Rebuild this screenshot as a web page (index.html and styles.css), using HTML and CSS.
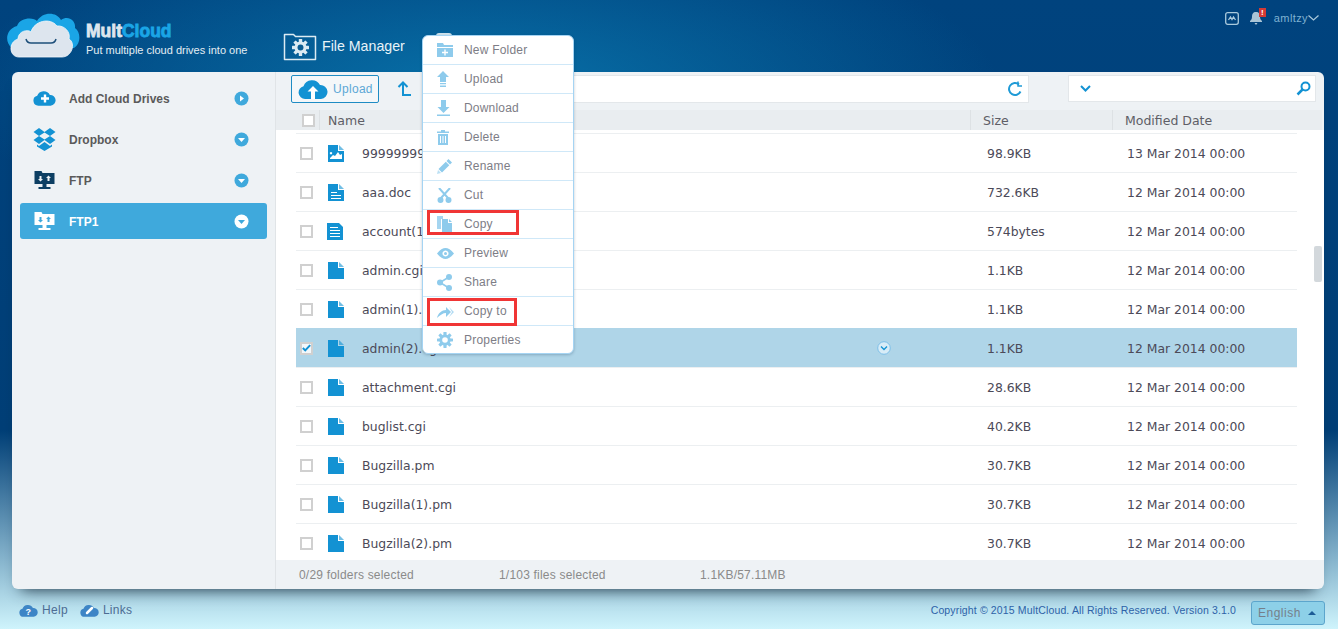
FILE: index.html
```html
<!DOCTYPE html>
<html lang="en">
<head>
    <meta charset="UTF-8">
    <meta name="viewport" content="width=device-width, initial-scale=1.0">
    <title>MultCloud | File Manager</title>
    <link rel="stylesheet" href="styles.css">
</head>
<body>

    <svg class="sprites" width="0" height="0">
        <symbol id="i-file" viewBox="0 0 16 17"><path d="M0 0h10v6h6v11H0z"/><path d="M11 0l5 5h-5z" opacity=".6"/></symbol>
        <symbol id="i-doc" viewBox="0 0 16 17"><path fill-rule="evenodd" d="M0 0h10v6h6v11H0zM3 8v1h6V8zM3 11v1h10v-1zM3 14v1h10v-1z"/><path d="M11 0l5 5h-5z" opacity=".6"/></symbol>
        <symbol id="i-text" viewBox="0 0 16 17"><path fill-rule="evenodd" d="M0 0h12l4 4v13H0zM3 4v1h8V4zM3 7v1h10V7zM3 10v1h10v-1zM3 13v1h10v-1z"/></symbol>
        <symbol id="i-image" viewBox="0 0 16 17"><path fill-rule="evenodd" d="M0 0h10v6h6v11H0zM2 13l3-3 2 1 3-4 2 3 2-1v5H2zM3 7a1.2 1.2 0 1 0 .01 0z"/><path d="M11 0l5 5h-5z" opacity=".6"/></symbol>
        <symbol id="i-ftp" viewBox="0 0 20 20"><path d="M0 1h7l1 2h12v11H0z"/><path d="M8 14h4v3h4v2H4v-2h4z"/><path d="M5 6h2v3h1.500L6 11.500 3.500 9H5zM13 11h2V8h1.500L14 5.500 11.500 8H13z" fill="var(--glyph)"/></symbol>
        <symbol id="i-gear" viewBox="0 0 20 20">
            <rect x="8" y="0" width="4" height="20" rx=".6"/>
            <rect x="8" y="0" width="4" height="20" rx=".6" transform="rotate(45 10 10)"/>
            <rect x="8" y="0" width="4" height="20" rx=".6" transform="rotate(90 10 10)"/>
            <rect x="8" y="0" width="4" height="20" rx=".6" transform="rotate(135 10 10)"/>
            <circle cx="10" cy="10" r="7"/>
            <circle cx="10" cy="10" r="3.500" fill="var(--glyph)"/>
        </symbol>
        <symbol id="i-cloud" viewBox="0 0 30 20"><path d="M7 20a6.500 6.500 0 0 1-1.500-12.800A9 9 0 0 1 22 6a7 7 0 0 1 1 14z"/></symbol>
    </svg>

    <div class="header">
        <div class="logo">
            <svg class="logo-cloud" width="74" height="46" viewBox="0 0 74 46">
                <path d="M6 36C-2 30 0 17 11 14 14 5 28 5 31 9 36 0 50-1 55 8 62 3 70 8 69 16 75 20 75 32 68 36z" fill="#1aa5e6"/>
                <path d="M13 45C3 45 2 30 12 27 12 19 22 17 25 20 28 9 44 5 51 14 58 13 65 20 63 27 70 31 66 45 56 45z" fill="#dde5ee" stroke="#f4f8fb" stroke-width=".8"/>
                <path d="M20 27q1 4 5 4h20q4 0 5-4" fill="none" stroke="#1d4f7a" stroke-width="1.500"/>
            </svg>
            <div class="logo-text">
                <div class="logo-name">Mult<span>Cloud</span></div>
                <div class="logo-slogan">Put multiple cloud drives into one</div>
            </div>
        </div>
        <div class="main-nav">
            <a class="main-nav-item" href="#">
                <svg width="35" height="28" viewBox="0 0 35 28" fill="none" stroke="#dcebf3" stroke-width="1.500"><path d="M1.500 26.500v-25h9l2 2h20v23z" stroke-linejoin="round"/><use href="#i-gear" x="9" y="6" width="17" height="17" fill="#dcebf3" stroke="none" style="--glyph:#0a5c92"/></svg>
                File Manager
            </a>
            <span class="nav-hidden"></span>
        </div>
        <div class="user-bar">
            <svg width="14" height="13" viewBox="0 0 14 13" fill="none" stroke="#a9c9dc" stroke-width="1.300"><rect x=".7" y=".7" width="12.600" height="11.600" rx="2"/><path d="M3.500 8l2-3 1.500 2.500L8.500 5l2 3"/></svg>
            <span class="bell">
                <svg width="12" height="14" viewBox="0 0 12 14" fill="#a9c4d6"><path d="M6 1C3 1 2 3 2 6c0 2-1 3-2 4v1h12v-1c-1-1-2-2-2-4 0-3-1-5-4-5zM4.500 12h3L6 14z"/></svg>
                <span class="bell-count">!</span>
            </span>
            <span class="user-name">amltzy</span>
            <svg width="11" height="6" viewBox="0 0 11 6" fill="none" stroke="#a9c9dc" stroke-width="1.200"><path d="M.5.500l5 4.500 5-4.500"/></svg>
        </div>
    </div>

    <div class="panel">
        <div class="sidebar">
            <div class="drive">
                <svg class="drive-icon" width="23" height="16" fill="#1392d3"><use href="#i-cloud"/><path d="M10.800 4.500h2.400v2.800H16v2.400h-2.800v2.800h-2.400V9.700H8V7.300h2.800z" fill="#fff"/></svg>
                <span>Add Cloud Drives</span>
                <svg class="drive-arrow" width="15" height="15" viewBox="0 0 15 15"><circle cx="7.500" cy="7.500" r="7" fill="#3fa9dc"/><path d="M6 4.500l4 3-4 3z" fill="#fff"/></svg>
            </div>
            <div class="drive">
                <svg class="drive-icon" width="23" height="23" viewBox="0 0 23 23" fill="#1392d3"><path fill-rule="evenodd" d="M6 0l5.500 4L17 0l5.500 4L17 8l5.500 4-5.500 4-5.500-4L6 16 .5 12 6 8 .5 4zM6 8l5.500 3.500L17 8l-5.500-3.500z"/><path d="M4 16.500L6 18l5.500-4 5.500 4 2-1.500v2L11.500 23 4 18.500z"/></svg>
                <span>Dropbox</span>
                <svg class="drive-arrow" width="15" height="15" viewBox="0 0 15 15"><circle cx="7.500" cy="7.500" r="7" fill="#3fa9dc"/><path d="M4 6h7l-3.500 4z" fill="#fff"/></svg>
            </div>
            <div class="drive">
                <svg class="drive-icon" width="20" height="20" fill="#0d3f63" style="--glyph:#eef2f5"><use href="#i-ftp"/></svg>
                <span>FTP</span>
                <svg class="drive-arrow" width="15" height="15" viewBox="0 0 15 15"><circle cx="7.500" cy="7.500" r="7" fill="#3fa9dc"/><path d="M4 6h7l-3.500 4z" fill="#fff"/></svg>
            </div>
            <div class="drive active">
                <svg class="drive-icon" width="20" height="20" fill="#fff" style="--glyph:#3fa9dc"><use href="#i-ftp"/></svg>
                <span>FTP1</span>
                <svg class="drive-arrow" width="15" height="15" viewBox="0 0 15 15"><circle cx="7.500" cy="7.500" r="7" fill="#fff"/><path d="M4 6h7l-3.500 4z" fill="#3fa9dc"/></svg>
            </div>
        </div>

        <div class="main">
            <div class="toolbar">
                <button class="upload-btn">
                    <svg width="30" height="20" fill="#1392d3"><use href="#i-cloud"/><path d="M15 7l5.500 5.500H17V20h-4v-7.500H9.500z" fill="#fff"/></svg>
                    Upload
                </button>
                <svg class="up-icon" width="14" height="16" viewBox="0 0 14 16" fill="none" stroke="#1392d3" stroke-width="2"><path d="M6 15V2M1.500 6L6 1.500 10.500 6M6 14h8"/></svg>
                <div class="path-box">
                    <svg width="16" height="16" viewBox="0 0 16 16" fill="none" stroke="#1f9ad6" stroke-width="2"><path d="M13.500 10.500A6 6 0 1 1 12 3.500"/><path d="M12 .5v4.500H16" stroke-width="1.500" transform="translate(-1 0)"/></svg>
                </div>
                <div class="search-box">
                    <svg width="11" height="7" viewBox="0 0 11 7" fill="none" stroke="#1392d3" stroke-width="2"><path d="M1 1l4.500 4.500L10 1"/></svg>
                    <svg width="15" height="15" viewBox="0 0 15 15" fill="none" stroke="#1392d3" stroke-width="2"><circle cx="9.500" cy="5.500" r="4"/><path d="M6.500 8.500L1.500 13.500" stroke-width="2.500"/></svg>
                </div>
            </div>

            <div class="list-head">
                <div class="col-check"><span class="checkbox"></span></div>
                <div class="col-name">Name</div>
                <div class="col-size">Size</div>
                <div class="col-date">Modified Date</div>
            </div>

            <div class="list-wrap">
                <div class="file-list">
                    <div class="file-row"><span class="checkbox"></span><svg class="file-icon" width="16" height="17"><use href="#i-image"/></svg><span class="file-name">99999999.jpg</span><span class="file-size">98.9KB</span><span class="file-date">13 Mar 2014 00:00</span></div>
                    <div class="file-row"><span class="checkbox"></span><svg class="file-icon" width="16" height="17"><use href="#i-doc"/></svg><span class="file-name">aaa.doc</span><span class="file-size">732.6KB</span><span class="file-date">12 Mar 2014 00:00</span></div>
                    <div class="file-row"><span class="checkbox"></span><svg class="file-icon text-icon" width="16" height="17"><use href="#i-text"/></svg><span class="file-name">account(1).txt</span><span class="file-size">574bytes</span><span class="file-date">12 Mar 2014 00:00</span></div>
                    <div class="file-row"><span class="checkbox"></span><svg class="file-icon" width="16" height="17"><use href="#i-file"/></svg><span class="file-name">admin.cgi</span><span class="file-size">1.1KB</span><span class="file-date">12 Mar 2014 00:00</span></div>
                    <div class="file-row"><span class="checkbox"></span><svg class="file-icon" width="16" height="17"><use href="#i-file"/></svg><span class="file-name">admin(1).cgi</span><span class="file-size">1.1KB</span><span class="file-date">12 Mar 2014 00:00</span></div>
                    <div class="file-row selected">
                        <span class="checkbox checked"><svg width="10" height="8" viewBox="0 0 11 9" fill="none" stroke="#1392d3" stroke-width="2.400"><path d="M1 4.500L4 7.500 10 1"/></svg></span>
                        <svg class="file-icon" width="16" height="17"><use href="#i-file"/></svg>
                        <span class="file-name">admin(2).cgi<svg class="row-menu" width="14" height="14" viewBox="0 0 14 14" fill="#d8ecf7" stroke="#7dbfe8"><circle cx="7" cy="7" r="6.300"/><path d="M4 5.500l3 3 3-3" fill="none" stroke="#1392d3" stroke-width="1.300"/></svg></span>
                        <span class="file-size">1.1KB</span><span class="file-date">12 Mar 2014 00:00</span>
                    </div>
                    <div class="file-row"><span class="checkbox"></span><svg class="file-icon" width="16" height="17"><use href="#i-file"/></svg><span class="file-name">attachment.cgi</span><span class="file-size">28.6KB</span><span class="file-date">12 Mar 2014 00:00</span></div>
                    <div class="file-row"><span class="checkbox"></span><svg class="file-icon" width="16" height="17"><use href="#i-file"/></svg><span class="file-name">buglist.cgi</span><span class="file-size">40.2KB</span><span class="file-date">12 Mar 2014 00:00</span></div>
                    <div class="file-row"><span class="checkbox"></span><svg class="file-icon" width="16" height="17"><use href="#i-file"/></svg><span class="file-name">Bugzilla.pm</span><span class="file-size">30.7KB</span><span class="file-date">12 Mar 2014 00:00</span></div>
                    <div class="file-row"><span class="checkbox"></span><svg class="file-icon" width="16" height="17"><use href="#i-file"/></svg><span class="file-name">Bugzilla(1).pm</span><span class="file-size">30.7KB</span><span class="file-date">12 Mar 2014 00:00</span></div>
                    <div class="file-row"><span class="checkbox"></span><svg class="file-icon" width="16" height="17"><use href="#i-file"/></svg><span class="file-name">Bugzilla(2).pm</span><span class="file-size">30.7KB</span><span class="file-date">12 Mar 2014 00:00</span></div>
                </div>
                <div class="scroll-thumb"></div>
            </div>

            <div class="status-bar">
                <span class="status-folders">0/29 folders selected</span>
                <span class="status-files">1/103 files selected</span>
                <span>1.1KB/57.11MB</span>
            </div>
        </div>
    </div>

    <div class="footer">
        <a class="foot-link" href="#">
            <svg width="19" height="13" fill="#3d85c6"><use href="#i-cloud" width="19" height="13"/><text x="9.500" y="11" class="foot-glyph">?</text></svg>
            Help
        </a>
        <a class="foot-link" href="#">
            <svg width="19" height="13" fill="#3d85c6"><use href="#i-cloud" width="19" height="13"/><path d="M7 9l5-5" stroke="#fff" stroke-width="2.500" stroke-linecap="round"/></svg>
            Links
        </a>
        <span class="copyright">Copyright © 2015 MultCloud. All Rights Reserved. Version 3.1.0</span>
        <div class="lang-select">English <i class="lang-caret"></i></div>
    </div>

    <div class="context-menu">
        <div class="menu-item"><svg width="16" height="14" viewBox="0 0 16 14"><path d="M0 0h6l1 2h9v2H0zM0 5h16v9H0z"/><path d="M7.300 6.500h1.400v2.300H11v1.400H8.700v2.300H7.300v-2.300H5V8.800h2.300z" fill="#fff"/></svg>New Folder</div>
        <div class="menu-item"><svg width="12" height="16" viewBox="0 0 12 16"><path d="M6 0l6 6H9v5H3V6H0zM3 12h6v1.200H3zM3 14.500h6V16H3z"/></svg>Upload</div>
        <div class="menu-item"><svg width="13" height="16" viewBox="0 0 13 16"><path d="M4 0h5v7h3.500l-6 6-6-6H4zM0 14.500h13V16H0z"/></svg>Download</div>
        <div class="menu-item"><svg width="12" height="15" viewBox="0 0 12 15"><path fill-rule="evenodd" d="M4 0h4v1.500h4V3H0V1.500h4zM1 4h10v11H1zM3 6v7h1V6zM5.500 6v7h1V6zM8 6v7h1V6z"/></svg>Delete</div>
        <div class="menu-item"><svg width="15" height="15" viewBox="0 0 15 15"><path d="M11.500 0L15 3.500 13 5.500 9.500 2zM8.800 2.700l3.500 3.500-7.300 7.300-3.500-3.500z"/><path d="M1 11l3 3-4 1z" opacity=".6"/></svg>Rename</div>
        <div class="menu-item"><svg width="15" height="15" viewBox="0 0 15 15" fill="none" stroke="#8ecbec" stroke-width="2"><path d="M2 0l9 10M13 0L4 10"/><circle cx="3.500" cy="12" r="2"/><circle cx="11.500" cy="12" r="2"/></svg>Cut</div>
        <div class="menu-item marked mark-copy"><svg width="15" height="16" viewBox="0 0 15 16"><path d="M0 0h6v3H4v10H0z" opacity=".8"/><path d="M5 3h6v4h4v9H5zM12 3l3 3h-3z"/></svg>Copy</div>
        <div class="menu-item"><svg width="17" height="11" viewBox="0 0 17 11"><path fill-rule="evenodd" d="M0 5.500C3 1.500 6 0 8.500 0S14 1.500 17 5.500C14 9.500 11 11 8.500 11S3 9.500 0 5.500zM8.500 2.500a3 3 0 1 0 .01 0z"/><circle cx="8.500" cy="5.500" r="1.500"/></svg>Preview</div>
        <div class="menu-item"><svg width="15" height="17" viewBox="0 0 15 17"><circle cx="3" cy="8.500" r="3"/><circle cx="12" cy="3" r="3"/><circle cx="12" cy="14" r="3"/><path d="M3 8.500L12 3M3 8.500L12 14" stroke="#8ecbec" stroke-width="1.500"/></svg>Share</div>
        <div class="menu-item marked mark-copy-to"><svg class="copy-to-icon" width="18" height="11" viewBox="0 0 18 11"><path d="M0 11C1 6 5 3 9 3V0l5 5-5 5V6C6 6 3 8 0 11z"/><path d="M12 0l5 5-5 5 3-5z" opacity=".7"/></svg>Copy to</div>
        <div class="menu-item"><svg width="16" height="16" style="--glyph:#fff"><use href="#i-gear" width="16" height="16"/></svg>Properties</div>
    </div>

</body>
</html>
```

FILE: styles.css
```css
/* General */
body {
    margin: 0;
    height: 629px;
    overflow: hidden;
    font-family: 'Liberation Sans', Arial, sans-serif;
    background:
        radial-gradient(ellipse 520px 170px at 480px 90px, rgba(10, 125, 180, 0.8), rgba(10, 125, 180, 0) 100%),
        linear-gradient(to bottom, #00437e 0, #003f77 430px, #cff4fc 629px);
}
a {
    text-decoration: none;
    color: inherit;
}
.sprites {
    position: absolute;
}

/* Header */
.header {
    height: 72px;
    display: flex;
    box-sizing: border-box;
    padding: 0 19px 0 6px;
}
.logo {
    display: flex;
    width: 277px;
    padding-top: 12px;
}
.logo-cloud {
    flex: none;
}
.logo-text {
    margin-left: 6px;
    padding-top: 9px;
}
.logo-name {
    font-size: 17.500px;
    line-height: 20px;
    font-weight: bold;
    color: #dde6ee;
    -webkit-text-stroke: 0.8px currentColor;
}
.logo-name span {
    color: #1aa5e6;
}
.logo-slogan {
    font-size: 11px;
    line-height: 16px;
    margin-top: 1px;
    color: #e3eef4;
    white-space: nowrap;
}
.main-nav {
    display: flex;
    flex: 1;
    padding-top: 33px;
    gap: 31px;
}
.main-nav-item {
    display: flex;
    align-items: flex-start;
    gap: 4px;
    color: #e8f3f8;
    font-size: 14.200px;
    line-height: 26px;
}
.nav-hidden {
    width: 16px;
    height: 6px;
    background: #cfe3ee;
    border-radius: 3px 3px 0 0;
}
.user-bar {
    display: flex;
    align-items: center;
    align-self: flex-start;
    margin-top: 11px;
    height: 14px;
    color: #7fb2d2;
    font-size: 11px;
}
.bell {
    position: relative;
    margin-left: 11px;
    height: 14px;
}
.bell-count {
    position: absolute;
    top: -3px;
    left: 9px;
    width: 7px;
    height: 9px;
    background: #d33a35;
    color: #fff;
    font-size: 8px;
    font-weight: bold;
    line-height: 9px;
    text-align: center;
}
.user-name {
    margin-left: 12px;
    letter-spacing: 0.4px;
}

/* Panel */
.panel {
    display: flex;
    height: 517px;
    margin: 0 14px 0 12px;
    border-radius: 6px;
    overflow: hidden;
    background: #eef2f5;
    box-shadow: 0 10px 14px -9px rgba(15, 35, 50, 0.85);
}
.sidebar {
    width: 264px;
    box-sizing: border-box;
    padding: 8px 8px 0;
    border-right: 1px solid #e0e4e7;
    display: flex;
    flex-direction: column;
    gap: 5px;
    flex: none;
}
.drive {
    display: flex;
    align-items: center;
    height: 36px;
    width: 247px;
    padding: 0 18px 0 13px;
    box-sizing: border-box;
    font-size: 12px;
    font-weight: bold;
    color: #5a5a5a;
    border-radius: 3px;
}
.drive-icon {
    width: 23px;
    flex: none;
    margin-right: 13px;
}
.drive span {
    flex: 1;
    padding-top: 1px;
}
.drive-arrow {
    flex: none;
}
.drive.active {
    background: #3fa9dc;
    color: #fff;
}

/* Main */
.main {
    flex: 1;
    display: flex;
    flex-direction: column;
    min-width: 0;
}
.toolbar {
    height: 38px;
    flex: none;
    display: flex;
    align-items: flex-start;
    padding-top: 3px;
    box-sizing: border-box;
    padding-left: 15px;
}
.upload-btn {
    width: 88px;
    height: 28px;
    padding: 0 0 0 6px;
    display: flex;
    align-items: center;
    gap: 5px;
    background: #f4f7f9;
    border: 1px solid #1f8cc4;
    border-radius: 2px;
    color: #5da8d6;
    font: 12px 'Liberation Sans', Arial, sans-serif;
    letter-spacing: 0.3px;
    box-sizing: border-box;
}
.up-icon {
    margin: 6px 0 0 18px;
}
.path-box {
    display: flex;
    align-items: center;
    justify-content: flex-end;
    margin-left: 24px;
    width: 594px;
    height: 28px;
    box-sizing: border-box;
    padding-right: 5px;
    background: #fff;
    border: 1px solid #e3e7ea;
}
.search-box {
    display: flex;
    align-items: center;
    justify-content: space-between;
    margin-left: 39px;
    width: 248px;
    height: 27px;
    box-sizing: border-box;
    padding: 0 4px 0 11px;
    background: #fff;
    border: 1px solid #e3e7ea;
}
.list-head {
    height: 20px;
    flex: none;
    display: flex;
    align-items: center;
    margin-right: 2px;
    background: #e9edf0;
    color: #5e5e66;
    font-family: 'DejaVu Sans', Verdana, sans-serif;
    font-size: 12.500px;
}
.list-head .checkbox {
    background: #fff;
}
.col-check {
    width: 44px;
    height: 20px;
    padding-left: 26px;
    box-sizing: border-box;
    display: flex;
    align-items: center;
    border-right: 1px solid #dde1e4;
}
.col-name {
    width: 650px;
    padding-left: 8px;
    box-sizing: border-box;
}
.col-size {
    width: 142px;
    height: 20px;
    line-height: 22px;
    padding-left: 12px;
    box-sizing: border-box;
    border-left: 1px solid #dde1e4;
}
.col-date {
    height: 20px;
    flex: 1;
    line-height: 22px;
    padding-left: 12px;
    border-left: 1px solid #dde1e4;
}
.checkbox {
    display: flex;
    align-items: center;
    justify-content: center;
    width: 13px;
    height: 13px;
    flex: none;
    box-sizing: border-box;
    border: 2px solid #d0d0d0;
}

/* File list */
.list-wrap {
    position: relative;
    flex: 1;
    background: #fff;
    overflow: hidden;
    padding-left: 20px;
}
.file-list {
    width: 1001px;
    padding-top: 3px;
}
.file-row {
    display: flex;
    align-items: center;
    height: 38px;
    border-top: 1px solid #eceff1;
    color: #4c4a58;
    font-family: 'DejaVu Sans', Verdana, sans-serif;
    font-size: 12.400px;
    padding-left: 4px;
}
.file-row.selected {
    background: #afd5e8;
    border-top-color: #afd5e8;
}
.file-icon {
    flex: none;
    margin-left: 15px;
    margin-right: 18px;
    fill: #1392d3;
    --glyph: #fff;
}
.file-icon.text-icon {
    margin-left: 14px;
    margin-right: 19px;
}
.file-name {
    flex: none;
    width: 625px;
    display: flex;
    align-items: center;
    justify-content: space-between;
    box-sizing: border-box;
    padding-right: 96px;
}
.file-size {
    flex: none;
    width: 140px;
}
.file-row .checkbox.checked {
    background: #f3f8fb;
}
.scroll-thumb {
    position: absolute;
    top: 116px;
    right: 2px;
    width: 8px;
    height: 36px;
    border-radius: 2px;
    background: #d3d8dc;
}
.status-bar {
    height: 29px;
    flex: none;
    display: flex;
    align-items: center;
    padding-left: 23px;
    color: #8a8a8a;
    font-size: 12px;
    letter-spacing: 0.2px;
}
.status-folders {
    width: 200px;
}
.status-files {
    width: 201px;
}

/* Footer */
.footer {
    height: 40px;
    display: flex;
    align-items: flex-start;
    padding: 0 13px 0 19px;
}
.foot-link {
    display: flex;
    align-items: center;
    gap: 4px;
    margin: 14px 12px 0 0;
    color: #4d6c93;
    font-size: 12px;
    letter-spacing: 0.3px;
}
.foot-glyph {
    fill: #fff;
    font: bold 9px 'Liberation Sans', Arial, sans-serif;
    text-anchor: middle;
}
.copyright {
    margin: 15px 15px 0 auto;
    font-size: 10.500px;
    color: #2d62a8;
    letter-spacing: 0.14px;
}
.lang-select {
    display: flex;
    align-items: center;
    justify-content: space-between;
    width: 74px;
    height: 24px;
    margin-top: 12px;
    box-sizing: border-box;
    padding: 0 8px 0 6px;
    background: #8dd0e8;
    border: 1px solid #5ca5cc;
    border-radius: 3px;
    color: #757f8a;
    font-size: 12px;
    letter-spacing: 0.5px;
}
.lang-caret {
    border: 4px solid transparent;
    border-top: 0;
    border-bottom: 4px solid #1d5c96;
}

/* Context menu */
.context-menu {
    position: absolute;
    left: 422px;
    top: 35px;
    width: 152px;
    box-sizing: border-box;
    background: #fff;
    border: 1px solid #a5d4f3;
    border-radius: 6px;
    box-shadow: 0 1px 3px rgba(0, 40, 70, 0.25);
}
.menu-item {
    position: relative;
    display: flex;
    align-items: center;
    height: 29px;
    box-sizing: border-box;
    padding-left: 41px;
    border-bottom: 1px solid #cfe8f8;
    color: #7d7d86;
    font-size: 12px;
    letter-spacing: 0.2px;
}
.menu-item:last-child {
    height: 27px;
    border-bottom: 0;
}
.menu-item svg {
    position: absolute;
    left: 14px;
    fill: #8ecbec;
}
.menu-item svg.copy-to-icon {
    top: 10px;
}
.menu-item.marked::after {
    content: "";
    position: absolute;
    left: 4px;
    box-sizing: border-box;
    border: 3px solid #f03535;
}
.mark-copy::after {
    top: 0;
    width: 92px;
    height: 25px;
}
.mark-copy-to::after {
    top: 1px;
    width: 90px;
    height: 28px;
}
```
